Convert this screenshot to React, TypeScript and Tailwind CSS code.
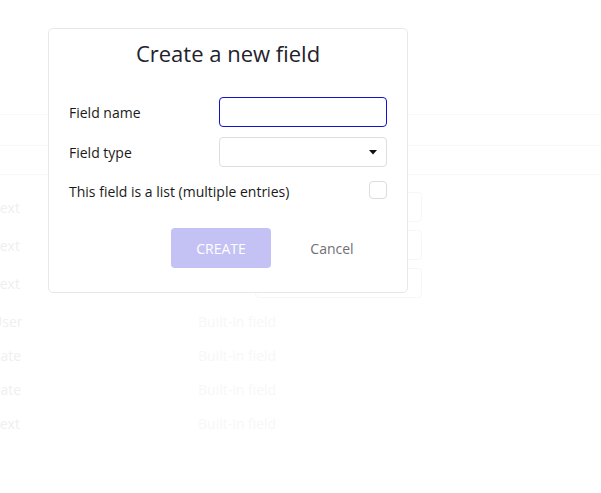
import React from "react";

const font = { fontFamily: '"Open Sans", "Noto Sans", sans-serif' };

function BoxRow({ type }: { type: string }) {
  return (
    <div className="h-[38px] flex items-center relative">
      <div className="w-[255px] shrink-0 -ml-[8px] pl-0 text-[14px] text-[#efefef]">{type}</div>
      <div className="ml-[8px] w-[167px] h-[30px] border border-[#f7f7f7] rounded-[4px]" />
    </div>
  );
}

function BuiltRow({ type }: { type: string }) {
  return (
    <div className="h-[34px] flex items-center">
      <div className="w-[206px] shrink-0 -ml-[8px] text-[14px] text-[#efefef]">{type}</div>
      <div className="text-[14px] text-[#f7f7f7]">Built-in field</div>
    </div>
  );
}

export default function App() {
  return (
    <div className="relative w-[601px] h-[493px] bg-white overflow-hidden" style={font}>
      {/* faded background page */}
      <div className="flex flex-col">
        <div className="h-[115px] border-b border-[#f8f8f8]" />
        <div className="h-[31px] border-b border-[#f8f8f8]" />
        <div className="h-[29px] border-b border-[#f8f8f8]" />
        <div className="h-[13px]" />
        <BoxRow type="Text" />
        <BoxRow type="Text" />
        <BoxRow type="Text" />
        <div className="h-[2px]" />
        <BuiltRow type="User" />
        <BuiltRow type="date" />
        <BuiltRow type="date" />
        <BuiltRow type="Text" />
      </div>

      {/* modal */}
      <div className="absolute left-[48px] top-[28px] w-[360px] h-[265px] bg-white border border-[#e8e8e8] rounded-[5px] flex flex-col px-[20px] pt-[9px]">
        <div className="text-center text-[22px] leading-[30px] text-[#22222c]">Create a new field</div>
        <div className="mt-[29px] flex items-center h-[30px]">
          <div className="w-[150px] text-[14px] text-[#1a1a1a]">Field name</div>
          <div className="w-[168px] h-[30px] border border-[#1212c8] rounded-[4px]" />
        </div>
        <div className="mt-[10px] flex items-center h-[30px]">
          <div className="w-[150px] text-[14px] text-[#1a1a1a]">Field type</div>
          <div className="w-[168px] h-[30px] border border-[#dedede] rounded-[4px] flex items-center justify-end pr-[9px]">
            <svg width="8" height="5" viewBox="0 0 8 5">
              <polygon points="0,0 8,0 4,4.5" fill="#111" />
            </svg>
          </div>
        </div>
        <div className="mt-[12px] flex items-center justify-between h-[22px]">
          <div className="text-[14px] text-[#1a1a1a] pt-[3px]">This field is a list (multiple entries)</div>
          <div className="w-[18px] h-[18px] border border-[#dcdcdc] rounded-[4px]" />
        </div>
        <div className="mt-[27px] flex items-center pl-[102px] gap-[11px]">
          <div className="w-[100px] h-[40px] rounded-[4px] bg-[#c4c2f4] flex items-center justify-center text-[14px] text-white">
            CREATE
          </div>
          <div className="w-[100px] h-[40px] flex items-center justify-center text-[14px] text-[#6f6f76]">
            Cancel
          </div>
        </div>
      </div>
    </div>
  );
}
